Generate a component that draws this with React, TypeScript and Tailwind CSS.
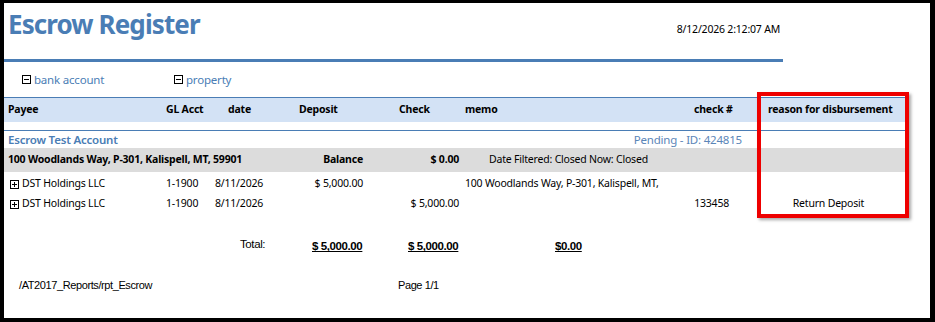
const font = { fontFamily: '"Noto Sans", "Open Sans", Arial, sans-serif' };
const narrow = { fontFamily: '"Liberation Sans Narrow", "Liberation Sans", Arial, sans-serif' };

function BoxIcon({ plus }: { plus?: boolean }) {
  return (
    <svg width="9" height="9" viewBox="0 0 9 9" className="mr-[3px] shrink-0">
      <rect x="0.5" y="0.5" width="8" height="8" fill="#fff" stroke="#000" />
      <line x1="2" y1="4.5" x2="7" y2="4.5" stroke="#000" />
      {plus && <line x1="4.5" y1="2" x2="4.5" y2="7" stroke="#000" />}
    </svg>
  );
}

function DataRow({ deposit, check, memo, checkNo, reason }: { deposit?: string; check?: string; memo?: string; checkNo?: string; reason?: string }) {
  return (
    <div className="flex items-center h-[20px] text-[10.5px] tracking-[-0.2px] text-black">
      <div className="w-[162px] flex items-center pl-[6px]">
        <BoxIcon plus />
        <span>DST Holdings LLC</span>
      </div>
      <div className="w-[49px]">1-1900</div>
      <div className="w-[89px]">8/11/2026</div>
      <div className="w-[59px] text-right">{deposit}</div>
      <div className="w-[96px] text-right">{check}</div>
      <div className="w-[229px] pl-[6px] whitespace-nowrap">{memo}</div>
      <div className="w-[41px] text-right">{checkNo}</div>
      <div className="flex-1 text-center pl-[18px] pr-[20px]">{reason}</div>
    </div>
  );
}

export default function App() {
  return (
    <div className="w-[935px] h-[322px] bg-black pt-[3px] pl-[4px] pr-[5px] pb-[4px]" style={font}>
      <div className="relative w-full h-full bg-white flex flex-col">
        <div className="flex items-start h-[56px]">
          <h1 className="text-[26px] font-bold text-[#4a7db5] leading-[32px] pl-[4px] pt-[5px] tracking-[-0.9px]">Escrow Register</h1>
          <div className="ml-auto mr-[150px] mt-[19px] text-[10.5px] tracking-[-0.2px] text-black">8/12/2026 2:12:07 AM</div>
        </div>
        <div className="w-[779px] h-[3px] bg-[#4a7db5]" />
        <div className="flex items-center h-[35px] pl-[18px] text-[11.5px] tracking-[-0.2px] text-[#4a7db5]">
          <span className="flex items-center w-[152px]"><BoxIcon />bank account</span>
          <span className="flex items-center"><BoxIcon />property</span>
        </div>
        <div className="w-[902px] flex items-center h-[25px] bg-[#d3e2f5] border-t border-[#4a7db5] text-[10.5px] tracking-[-0.2px] font-bold text-black">
          <div className="w-[162px] pl-[4px]">Payee</div>
          <div className="w-[62px]">GL Acct</div>
          <div className="w-[71px]">date</div>
          <div className="w-[100px]">Deposit</div>
          <div className="w-[66px]">Check</div>
          <div className="w-[229px]">memo</div>
          <div className="w-[74px]">check #</div>
          <div className="flex-1">reason for disbursement</div>
        </div>
        <div className="w-[902px] h-[9px] border-b border-[#4a7db5]" />
        <div className="w-[902px] flex items-center h-[17px] text-[11.5px] tracking-[-0.2px]">
          <span className="pl-[4px] font-semibold text-[#4a7db5]">Escrow Test Account</span>
          <span className="ml-auto mr-[164px] text-[#5b86b8]">Pending - ID: 424815</span>
        </div>
        <div className="w-[902px] flex items-center h-[24px] bg-[#dcdcdc] text-[10.5px] tracking-[-0.2px] text-black">
          <div className="w-[304px] pl-[4px] font-bold whitespace-nowrap">100 Woodlands Way, P-301, Kalispell, MT, 59901</div>
          <div className="w-[55px] text-right font-bold">Balance</div>
          <div className="w-[96px] text-right font-bold">$ 0.00</div>
          <div className="pl-[30px]">Date Filtered: Closed Now: Closed</div>
        </div>
        <div className="pt-[2px]">
          <DataRow deposit="$ 5,000.00" memo="100 Woodlands Way, P-301, Kalispell, MT," />
          <DataRow check="$ 5,000.00" checkNo="133458" reason="Return Deposit" />
        </div>
        <div className="flex items-center h-[24px] mt-[21px] text-[11.5px] text-black tracking-[-0.4px]" style={narrow}>
          <div className="w-[236px]" />
          <div className="w-[72px] -mt-[5px]">Total:</div>
          <div className="w-[96px] font-bold underline">$ 5,000.00</div>
          <div className="w-[147px] font-bold underline">$ 5,000.00</div>
          <div className="font-bold underline">$0.00</div>
        </div>
        <div className="flex items-center h-[24px] mt-[14px] text-[11px] text-black tracking-[-0.4px]" style={narrow}>
          <div className="w-[394px] pl-[15px]">/AT2017_Reports/rpt_Escrow</div>
          <div>Page 1/1</div>
        </div>
        <div className="absolute left-[753px] top-[89px] w-[152px] h-[126px] border-[4px] border-[#ee0000] shadow-[2px_2px_3px_rgba(0,0,0,0.35)]" />
      </div>
    </div>
  );
}
